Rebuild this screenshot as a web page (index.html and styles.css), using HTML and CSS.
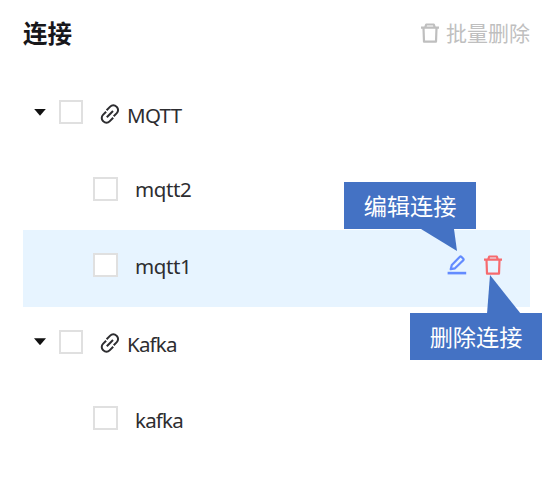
FILE: index.html
```
<!DOCTYPE html>
<html lang="zh-CN">
<head>
<meta charset="utf-8">
<title>连接</title>
<link rel="stylesheet" href="styles.css">
</head>
<body>
<svg class="defs" width="0" height="0">
  <symbol id="link" viewBox="0 0 20 20">
    <g fill="none" stroke="currentColor" stroke-width="2">
      <path d="M6.6 6.2 10.2 2.6a4.3 4.3 0 0 1 6.2 0l.4.4a4.3 4.3 0 0 1 0 6.1L13.7 12.2"/>
      <path d="M13.2 13.8 9.6 17.4a4.3 4.3 0 0 1-6.2 0l-.4-.4a4.3 4.3 0 0 1 0-6.1L6.1 7.8"/>
      <path d="M6.8 13.2 13 7"/>
    </g>
  </symbol>
  <symbol id="trash" viewBox="0 0 18 20">
    <path d="M0 4.6H18M4.3 4.2 5.2 1.5H12.8L13.7 4.2M2.5 5 3 18.7H15L15.5 5" fill="none" stroke="currentColor" stroke-width="2.2" stroke-linejoin="round"/>
  </symbol>
  <symbol id="edit" viewBox="0 0 20 20">
    <path d="M3.7 14.2 4.8 10 12.9 1.8Q13.6 1.1 14.3 1.8L16.3 3.8Q17 4.5 16.3 5.2L8 13.3Z" fill="none" stroke="currentColor" stroke-width="2.2" stroke-linejoin="round"/>
    <path d="M.6 18.1H19.2" stroke="currentColor" stroke-width="2.6"/>
  </symbol>
</svg>
<main class="panel">
  <header class="header">
    <h1 class="title">连接</h1>
    <div class="batch"><svg class="trash"><use href="#trash"/></svg><span>批量删除</span></div>
  </header>
  <div class="row group">
    <span class="caret"></span><span class="check"></span>
    <svg class="link"><use href="#link"/></svg><span class="label upper">MQTT</span>
  </div>
  <div class="row child"><span class="check"></span><span class="label">mqtt2</span></div>
  <div class="row child active">
    <span class="check"></span><span class="label">mqtt1</span>
    <div class="actions">
      <svg class="edit"><use href="#edit"/></svg>
      <svg class="trash"><use href="#trash"/></svg>
    </div>
    <div class="tip tip-edit">编辑连接<svg class="tail" viewBox="0 0 36 22"><path d="M0 0H33L36 22Z"/></svg></div>
    <div class="tip tip-delete">删除连接<svg class="tail" viewBox="0 0 34 39"><path d="M0 39 3 0 34 39Z"/></svg></div>
  </div>
  <div class="row group">
    <span class="caret"></span><span class="check"></span>
    <svg class="link"><use href="#link"/></svg><span class="label kafka">Kafka</span>
  </div>
  <div class="row child"><span class="check"></span><span class="label kafka">kafka</span></div>
</main>
</body>
</html>
```
FILE: styles.css
```
* { box-sizing: border-box; }
body {
  margin: 0;
  background: #fff;
  color: #2d2d30;
  font-family: "Noto Sans", "Noto Sans CJK SC", sans-serif;
}
svg { display: block; flex: none; }
.defs { position: absolute; }
.panel { width: 530px; padding-left: 23px; }
.header {
  display: flex;
  justify-content: space-between;
  height: 77px;
  padding-top: 18px;
  font-family: "Noto Sans CJK SC", sans-serif;
  line-height: 30px;
}
.title { margin: 0; font-size: 24.5px; font-weight: 700; line-height: 30px; color: #17171a; }
.batch { display: flex; gap: 7px; height: 30px; font-size: 21px; line-height: 29px; color: #bfbfbf; }
.trash { width: 18px; height: 20px; }
.batch .trash { margin-top: 5px; }
.row {
  position: relative;
  display: flex;
  align-items: center;
  height: 76.5px;
  padding-bottom: 6px;
}
.group { padding-left: 11px; }
.child { padding-left: 70px; }
.active { background: #e7f4ff; }
.caret {
  width: 12px;
  height: 7px;
  margin-right: 13px;
  background: #111;
  clip-path: polygon(0 0, 100% 0, 50% 100%);
}
.check { width: 24px; height: 24px; flex: none; border: 2px solid #e0e0e0; background: #fff; }
.child .check { width: 25px; }
.link { width: 20px; height: 20px; margin: 3px 7px 0 17px; }
.label { font-size: 20.5px; line-height: 28px; letter-spacing: -.4px; padding-top: 5px; }
.child .label { margin-left: 17px; padding-top: 1px; }
.label.upper { letter-spacing: -.7px; }
.label.kafka { letter-spacing: -.8px; padding-top: 4px; }
.actions { display: flex; gap: 17px; margin: 0 28px 0 auto; }
.edit { width: 20px; height: 20px; color: #638bff; }
.actions .trash { color: #f66a6e; }
.tip {
  position: absolute;
  width: 132px;
  height: 47px;
  background: #4472c4;
  color: #fff;
  font: 23.2px/47px "Noto Sans CJK SC", sans-serif;
  text-align: center;
}
.tip-edit { left: 321px; top: -48px; }
.tip-delete { left: 387px; top: 83px; z-index: 1; }
.tail { position: absolute; fill: #4472c4; }
.tip-edit .tail { left: 77px; top: 47px; width: 36px; height: 22px; }
.tip-delete .tail { left: 77px; top: -38px; width: 34px; height: 39px; }
```
